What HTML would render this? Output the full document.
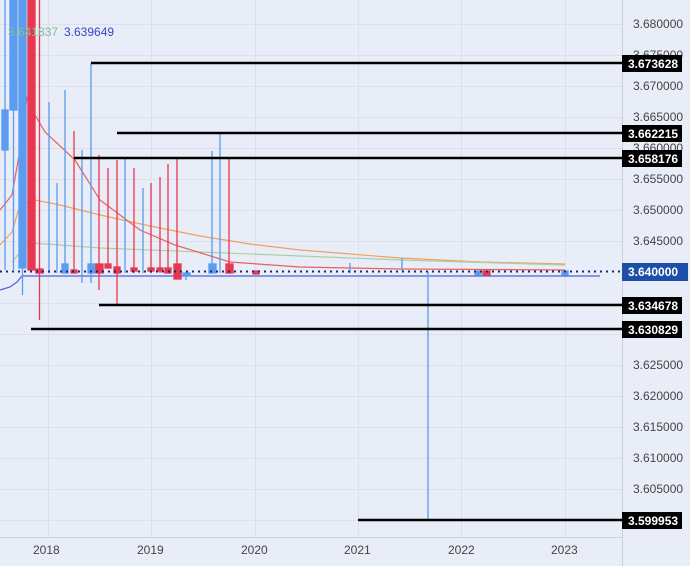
<!DOCTYPE html>
<html><head><meta charset="utf-8"><style>
html,body{margin:0;padding:0;background:#e9edf7;}
svg{display:block;font-family:"Liberation Sans",sans-serif;}
</style></head><body>
<svg width="690" height="566" viewBox="0 0 690 566" xmlns="http://www.w3.org/2000/svg">
<rect width="690" height="566" fill="#e9edf7"/>
<g stroke="#dbe0ec" stroke-width="1">
<line x1="0" y1="24.5" x2="622" y2="24.5"/><line x1="0" y1="55.5" x2="622" y2="55.5"/><line x1="0" y1="86.5" x2="622" y2="86.5"/><line x1="0" y1="117.5" x2="622" y2="117.5"/><line x1="0" y1="148.5" x2="622" y2="148.5"/><line x1="0" y1="179.5" x2="622" y2="179.5"/><line x1="0" y1="210.5" x2="622" y2="210.5"/><line x1="0" y1="241.5" x2="622" y2="241.5"/><line x1="0" y1="303.5" x2="622" y2="303.5"/><line x1="0" y1="334.5" x2="622" y2="334.5"/><line x1="0" y1="365.5" x2="622" y2="365.5"/><line x1="0" y1="396.5" x2="622" y2="396.5"/><line x1="0" y1="427.5" x2="622" y2="427.5"/><line x1="0" y1="458.5" x2="622" y2="458.5"/><line x1="0" y1="489.5" x2="622" y2="489.5"/><line x1="0" y1="520.5" x2="622" y2="520.5"/>
<line x1="48.5" y1="0" x2="48.5" y2="537"/><line x1="151.5" y1="0" x2="151.5" y2="537"/><line x1="255.5" y1="0" x2="255.5" y2="537"/><line x1="358.5" y1="0" x2="358.5" y2="537"/><line x1="461.5" y1="0" x2="461.5" y2="537"/><line x1="565.5" y1="0" x2="565.5" y2="537"/>
</g>
<line x1="622.5" y1="0" x2="622.5" y2="566" stroke="#c9cfdc"/>
<line x1="0" y1="537.5" x2="622" y2="537.5" stroke="#c9cfdc"/>
<!-- MAs -->
<polyline fill="none" stroke="#f0a060" stroke-width="1.2" points="0,245 12,232 20,205 35,200 60,205 100,215 150,226 200,236 250,244 300,250 400,258 480,262 565,264"/>
<polyline fill="none" stroke="#a8d0a8" stroke-width="1.2" points="12,262 22,250 30,243 60,245 100,248 200,252 300,256 400,260 565,265"/>
<polyline fill="none" stroke="#e86060" stroke-width="1.2" points="0,210 12,195 20,150 27,98 35,115 45,132 75,160 100,200 140,230 175,245 230,262 300,267 400,269 565,270"/>
<polyline fill="none" stroke="#5060e0" stroke-width="1.2" points="0,290 10,287 17,282 22,276 600,276"/>
<g stroke-width="1.3">
<g stroke="#5b9cf0" fill="#5b9cf0">
<line x1="5" y1="0" x2="5" y2="270"/><rect x="2" y="110" width="6" height="40"/>
<line x1="13.5" y1="0" x2="13.5" y2="270"/><rect x="10" y="0" width="7" height="110"/>
<line x1="22.5" y1="0" x2="22.5" y2="295"/><rect x="19" y="0" width="7" height="268"/>
<line x1="49" y1="102" x2="49" y2="273"/><line x1="57" y1="183" x2="57" y2="273"/>
<line x1="65" y1="90" x2="65" y2="273"/><rect x="62" y="264" width="6" height="9"/>
<line x1="82" y1="150" x2="82" y2="283"/>
<line x1="91" y1="63" x2="91" y2="283"/><rect x="88" y="264" width="7" height="9"/>
<line x1="125" y1="158" x2="125" y2="273"/><line x1="143" y1="188" x2="143" y2="273"/>
<rect x="183" y="273" width="7" height="3"/><line x1="186" y1="273" x2="186" y2="280"/>
<line x1="212" y1="151" x2="212" y2="273"/><rect x="209" y="264" width="7" height="9"/>
<line x1="220" y1="132" x2="220" y2="273"/>
<line x1="350" y1="263" x2="350" y2="273"/><line x1="402" y1="258" x2="402" y2="271"/>
<line x1="428" y1="272" x2="428" y2="520"/>
<rect x="475" y="271" width="6" height="4"/><rect x="562" y="271" width="6" height="4"/>
</g>
<g stroke="#e8384f" fill="#e8384f">
<rect x="28" y="0" width="7" height="270"/>
<line x1="39.5" y1="0" x2="39.5" y2="320"/><rect x="36" y="269" width="7" height="4"/>
<line x1="74" y1="131" x2="74" y2="273"/><rect x="71" y="270" width="6" height="3"/>
<line x1="99" y1="155" x2="99" y2="290"/><rect x="96" y="264" width="7" height="9"/>
<line x1="108" y1="168" x2="108" y2="268"/><rect x="105" y="264" width="6" height="4"/>
<line x1="117" y1="160" x2="117" y2="304"/><rect x="114" y="267" width="6" height="6"/>
<line x1="134" y1="168" x2="134" y2="273"/><rect x="131" y="268" width="6" height="3"/>
<line x1="151" y1="183" x2="151" y2="273"/><rect x="148" y="268" width="6" height="3"/>
<line x1="160" y1="177" x2="160" y2="273"/><rect x="157" y="268" width="6" height="3"/>
<line x1="168" y1="164" x2="168" y2="273"/><rect x="165" y="268" width="6" height="5"/>
<line x1="177" y1="158" x2="177" y2="278"/><rect x="174" y="264" width="7" height="15"/>
<line x1="229" y1="158" x2="229" y2="273"/><rect x="226" y="264" width="7" height="9"/>
<rect x="253" y="271" width="6" height="3"/>
<rect x="483" y="271" width="7" height="4"/>
</g>
</g>
<line x1="0" y1="271.5" x2="622" y2="271.5" stroke="#1a2a6a" stroke-width="2" stroke-dasharray="2,4"/>
<g stroke="#000" stroke-width="2.5">
<line x1="91" y1="63" x2="622" y2="63"/><line x1="117" y1="133" x2="622" y2="133"/><line x1="74" y1="158" x2="622" y2="158"/>
<line x1="99" y1="305" x2="622" y2="305"/><line x1="31" y1="329" x2="622" y2="329"/><line x1="358" y1="520" x2="622" y2="520"/>
</g>
<g font-size="12" fill="#444">
<text x="633" y="28">3.680000</text><text x="633" y="59">3.675000</text><text x="633" y="90">3.670000</text><text x="633" y="121">3.665000</text><text x="633" y="152">3.660000</text><text x="633" y="183">3.655000</text><text x="633" y="214">3.650000</text><text x="633" y="245">3.645000</text><text x="633" y="369">3.625000</text><text x="633" y="400">3.620000</text><text x="633" y="431">3.615000</text><text x="633" y="462">3.610000</text><text x="633" y="493">3.605000</text>
<text x="33" y="554">2018</text><text x="137" y="554">2019</text><text x="241" y="554">2020</text><text x="344" y="554">2021</text><text x="448" y="554">2022</text><text x="551" y="554">2023</text>
</g>
<g font-size="12" font-weight="bold" fill="#fff">
<rect x="622" y="55" width="60" height="17" fill="#000"/><text x="628" y="68">3.673628</text>
<rect x="622" y="125" width="60" height="17" fill="#000"/><text x="628" y="138">3.662215</text>
<rect x="622" y="150" width="60" height="17" fill="#000"/><text x="628" y="163">3.658176</text>
<rect x="622" y="263" width="66" height="18" fill="#1e4fa8"/><text x="628" y="276">3.640000</text>
<rect x="622" y="297" width="60" height="17" fill="#000"/><text x="628" y="310">3.634678</text>
<rect x="622" y="321" width="60" height="17" fill="#000"/><text x="628" y="334">3.630829</text>
<rect x="622" y="512" width="60" height="17" fill="#000"/><text x="628" y="525">3.599953</text>
</g>
<text x="8" y="36" font-size="12" fill="#7fbf8f">3.641837</text>
<text x="64" y="36" font-size="12" fill="#3a44c8">3.639649</text>
</svg>
</body></html>
